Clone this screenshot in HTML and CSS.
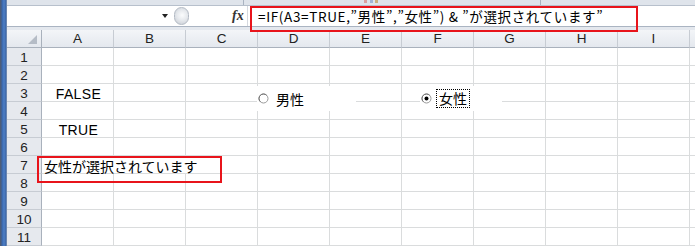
FILE: index.html
```html
<!DOCTYPE html>
<html lang="ja">
<head>
    <meta charset="UTF-8">
    <title>IF関数とオプションボタン</title>
    <link rel="stylesheet" href="styles.css">
</head>
<body>

<div class="window">
    <div class="edge"></div>
    <div class="app">
        <div class="ribbon-end">
            <span class="sep first"></span>
            <span class="dots"></span>
            <span class="sep second"></span>
        </div>
        <div class="formula-bar">
            <div class="name-box"></div>
            <span class="drop"></span>
            <span class="splitter"></span>
            <span class="fx">fx</span>
            <div class="formula">=IF(A3=TRUE,”男性”,”女性”) &amp; ”が選択されています”</div>
        </div>
        <div class="gap"></div>

        <div class="sheet">
            <div class="corner"><span class="tri"></span></div>
            <div class="col-head">A</div>
            <div class="col-head">B</div>
            <div class="col-head">C</div>
            <div class="col-head">D</div>
            <div class="col-head">E</div>
            <div class="col-head">F</div>
            <div class="col-head">G</div>
            <div class="col-head">H</div>
            <div class="col-head">I</div>
            <div class="col-head last"></div>
        </div>
    </div>

    <!-- オプションボタン (シート上のコントロール) -->
    <div class="option male">
        <svg class="radio" width="11" height="11" viewBox="0 0 11 11">
            <circle cx="5.5" cy="5.5" r="4.5" fill="#fff" stroke="#9a9a9a"/>
            <path d="M2.3 8.7 A4.5 4.5 0 0 1 8.7 2.3" fill="none" stroke="#6f6f6f"/>
        </svg>
        <span class="label">男性</span>
    </div>
    <div class="option female">
        <svg class="radio" width="11" height="11" viewBox="0 0 11 11">
            <circle cx="5.5" cy="5.5" r="4.5" fill="#fff" stroke="#9a9a9a"/>
            <path d="M2.3 8.7 A4.5 4.5 0 0 1 8.7 2.3" fill="none" stroke="#6f6f6f"/>
            <circle cx="5.5" cy="5.5" r="2" fill="#000"/>
        </svg>
        <span class="label focus">女性</span>
    </div>

    <div class="mark mark-formula"></div>
    <div class="mark mark-cell"></div>
</div>

<script src="sheet.js"></script>
</body>
</html>
```

FILE: sheet.js
```js
// 行 1〜11 を作る。A3, A5, A7 に値を入れる
var sheet = document.querySelector('.sheet');
var values = {3: 'FALSE', 5: 'TRUE', 7: '女性が選択されています'};

for (var r = 1; r <= 11; r++) {
    var head = document.createElement('div');
    head.className = 'row-head';
    head.textContent = r;
    sheet.appendChild(head);

    var c = 0;
    while (c < 10) {
        var cell = document.createElement('div');
        cell.className = 'cell';
        if (c === 0 && values[r]) {
            cell.textContent = values[r];
            if (r === 7) {
                // 文字列は右のセルへはみ出す
                cell.className += ' text spill';
                c += 3;
                sheet.appendChild(cell);
                continue;
            }
            cell.className += ' bool';
        }
        if (c === 9) {
            cell.className += ' last';
        }
        sheet.appendChild(cell);
        c++;
    }
}
```

FILE: styles.css
```css
*{
    margin: 0;
    padding: 0;
    box-sizing: border-box;
}
body{
    width: 695px;
    height: 246px;
    overflow: hidden;
    background: #fff;
    font-family: "Liberation Sans", "Noto Sans CJK JP", sans-serif;
    color: #000;
}
.window{
    position: relative;
    display: flex;
    height: 246px;
}
.edge{
    width: 7px;
    flex: none;
    background: linear-gradient(to right, #4d5d78 0, #4d5d78 1px, #3766ad 2px, #4f7fc4 4px, #3b66a8 6px, #9aa6b8 7px);
}
.app{
    flex: 1;
    display: flex;
    flex-direction: column;
    min-width: 0;
}

/* リボンの下端 */
.ribbon-end{
    height: 7px;
    display: flex;
    background: #dfe4eb;
    border-bottom: 1px solid #b7c0cc;
}
.sep{
    width: 1px;
    background: #a9b3c1;
}
.sep.first{
    margin-left: 236px;
}
.dots{
    width: 14px;
    height: 3px;
    margin-left: 120px;
    background: linear-gradient(to right, #d9a0a0 0 3px, transparent 3px 6px, #a0b4d9 6px 9px, transparent 9px 11px, #c9b080 11px);
}
.sep.second{
    margin-left: 162px;
}

/* 数式バー */
.formula-bar{
    height: 21px;
    display: flex;
    align-items: center;
    background: #fff;
    border-bottom: 1px solid #aab4c2;
}
.name-box{
    width: 151px;
    height: 100%;
}
.drop{
    width: 0;
    height: 0;
    margin-left: 4px;
    border-top: 4px solid #222;
    border-left: 3px solid transparent;
    border-right: 3px solid transparent;
}
.splitter{
    width: 15px;
    height: 18px;
    margin-left: 6px;
    border: 1px solid #b3bac4;
    border-radius: 9px;
    background: radial-gradient(circle at 55% 45%, #fbfcfd 0, #e6e9ed 45%, #c4c9d1 100%);
}
.fx{
    margin-left: 43px;
    width: 15px;
    font-family: "Liberation Serif", serif;
    font-style: italic;
    font-weight: bold;
    font-size: 14px;
    color: #333;
}
.formula{
    flex: 1;
    height: 100%;
    padding-left: 10px;
    border-left: 1px solid #d5d9df;
    font-family: "Noto Sans CJK JP", sans-serif;
    font-size: 13.5px;
    letter-spacing: 0.65px;
    line-height: 21px;
    white-space: nowrap;
}
.gap{
    height: 4px;
    background: #e4e8ee;
}

/* シート */
.sheet{
    display: grid;
    grid-template-columns: 35px repeat(9, 72px) 1fr;
    grid-auto-rows: 18px;
    font-size: 14px;
}
.corner,
.col-head,
.row-head{
    background: linear-gradient(#f3f5f8, #e4e8ee);
    color: #222;
    font-family: "Liberation Sans", sans-serif;
    font-size: 13.5px;
}
.corner{
    position: relative;
    border-right: 1px solid #a9b1bc;
    border-bottom: 1px solid #a9b1bc;
}
.tri{
    position: absolute;
    right: 4px;
    bottom: 3px;
    width: 0;
    height: 0;
    border-left: 9px solid transparent;
    border-bottom: 9px solid #b5bcc6;
}
.col-head{
    display: flex;
    justify-content: center;
    align-items: center;
    border-right: 1px solid #c7ccd3;
    border-bottom: 1px solid #a9b1bc;
}
.col-head.last{
    border-right: none;
}
.row-head{
    display: flex;
    justify-content: center;
    align-items: center;
    padding-top: 1px;
    background: #e6e9ee;
    border-right: 1px solid #a9b1bc;
    border-bottom: 1px solid #c7ccd3;
}
.cell{
    border-right: 1px solid #dadcdd;
    border-bottom: 1px solid #dadcdd;
    display: flex;
    align-items: center;
    white-space: nowrap;
    line-height: 16px;
}
.cell.last{
    border-right: none;
}
.cell.bool{
    justify-content: center;
    padding: 3px 0 0 2px;
    letter-spacing: 0.4px;
}
.cell.text{
    font-family: "Noto Sans CJK JP", sans-serif;
    padding: 2px 0 0 2px;
    font-size: 14px;
}
.cell.spill{
    grid-column: span 3;
}

/* オプションボタン */
.option{
    position: absolute;
    top: 86px;
    height: 25px;
    display: flex;
    align-items: center;
    background: #fff;
    font-family: "Noto Sans CJK JP", sans-serif;
    font-size: 14px;
}
.option.male{
    left: 257px;
    width: 99px;
}
.option.female{
    left: 420px;
    width: 82px;
}
.radio{
    margin-left: 1px;
    flex: none;
}
.male .label{
    margin-left: 7px;
}
.female .label{
    margin-left: 4px;
}
.label.focus{
    border: 1px dotted #000;
    padding: 0 2px;
    line-height: 17px;
}

/* 赤い囲み */
.mark{
    position: absolute;
    border: 2px solid #e8141b;
}
.mark-formula{
    left: 250px;
    top: 6px;
    width: 388px;
    height: 26px;
}
.mark-cell{
    left: 37px;
    top: 156px;
    width: 185px;
    height: 27px;
}
```
